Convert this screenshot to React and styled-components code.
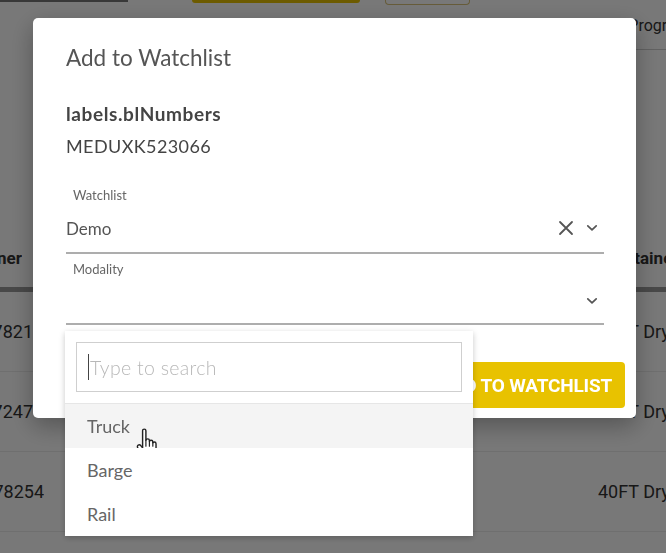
import React from "react";
import styled, { createGlobalStyle } from "styled-components";

const Global = createGlobalStyle`
  html, body { margin: 0; padding: 0; background: #fff; }
  body { font-family: Lato, "Open Sans", sans-serif; overflow: hidden; }
  * { box-sizing: border-box; }
`;

const Page = styled.div`
  width: 666px;
  height: 553px;
  position: relative;
  overflow: hidden;
  background: #fff;
  font-family: Roboto, sans-serif;
  color: #222;
`;

const TopStrip = styled.div`
  display: flex;
  align-items: flex-start;
  height: 6px;
`;

const StripLine = styled.div`
  width: 128px;
  height: 2px;
  background: #777;
`;

const StripButton = styled.div`
  width: ${(p) => p.$w}px;
  height: ${(p) => (p.$outline ? 5 : 3)}px;
  margin-left: ${(p) => p.$ml}px;
  background: ${(p) => (p.$outline ? "transparent" : "#e8c200")};
  border: ${(p) => (p.$outline ? "1px solid #d9c27a" : "none")};
  border-top: none;
  border-radius: 0 0 4px 4px;
`;

const TabsRow = styled.div`
  display: flex;
  gap: 22px;
  padding: 10px 0 0 6px;
  height: 44px;
  border-bottom: 1px solid #cfcfcf;
  margin-left: 540px;
  font-size: 16px;
  color: #333;
  white-space: nowrap;
  overflow: hidden;
`;

const HeadRow = styled.div`
  display: flex;
  justify-content: space-between;
  align-items: center;
  height: 242px;
  padding-top: 178px;
  border-bottom: 5px solid #9a9a9a;
  font-weight: 700;
  font-size: 17px;
  color: #333;
`;

const Row = styled.div`
  display: flex;
  justify-content: space-between;
  align-items: center;
  height: 80px;
  border-bottom: 1px solid #ececec;
  font-size: 18px;
  color: #333;
`;

const LeftCell = styled.div`
  width: ${(p) => p.$w}px;
  display: flex;
  justify-content: flex-end;
  overflow: hidden;
  white-space: nowrap;
  flex-shrink: 0;
`;

const RightCell = styled.div`
  width: ${(p) => p.$w}px;
  white-space: nowrap;
  overflow: hidden;
  flex-shrink: 0;
`;

const Overlay = styled.div`
  position: fixed;
  inset: 0;
  background: rgba(0, 0, 0, 0.53);
`;

const Modal = styled.div`
  position: absolute;
  left: 33px;
  top: 18px;
  width: 603px;
  height: 400px;
  background: #fff;
  border-radius: 5px;
  box-shadow: 0 8px 24px rgba(0, 0, 0, 0.3);
  display: flex;
  flex-direction: column;
  font-family: Lato, sans-serif;
`;

const Body = styled.div`
  padding: 26px 32px 0 33px;
  display: flex;
  flex-direction: column;
`;

const Title = styled.h2`
  margin: 0;
  font-size: 22.5px;
  line-height: 28px;
  font-weight: 400;
  color: #555;
`;

const InfoLabel = styled.div`
  margin-top: 26px;
  font-size: 19px;
  line-height: 32px;
  font-weight: 700;
  letter-spacing: 0.6px;
  color: #444;
`;

const InfoValue = styled.div`
  font-size: 18px;
  line-height: 32px;
  color: #444;
  letter-spacing: 0.4px;
`;

const Field = styled.div`
  position: relative;
  margin-top: ${(p) => p.$mt}px;
  display: flex;
  flex-direction: column;
`;

const FieldLabel = styled.div`
  font-size: 13px;
  line-height: 18px;
  color: #666;
  padding-left: 7px;
`;

const FieldRow = styled.div`
  height: ${(p) => p.$h}px;
  display: flex;
  align-items: center;
  border-bottom: 2px solid #adadad;
  padding-right: 6px;
`;

const FieldValue = styled.div`
  flex: 1;
  font-size: 17px;
  color: #555;
`;

const IconButton = styled.span`
  display: flex;
  align-items: center;
  justify-content: center;
  margin-left: ${(p) => p.$ml || 0}px;
  color: #555;
`;

const Footer = styled.div`
  display: flex;
  justify-content: flex-end;
  padding: 36px 11px 10px;
  margin-top: auto;
`;

const PrimaryButton = styled.button`
  height: 46px;
  padding: 0 13px 0 16px;
  border: none;
  border-radius: 4px;
  background: #e8c200;
  color: #fff;
  font-family: Roboto, sans-serif;
  font-weight: 700;
  font-size: 19px;
  letter-spacing: -0.2px;
  text-transform: uppercase;
`;

const Dropdown = styled.div`
  position: absolute;
  left: -1px;
  top: calc(100% + 6px);
  width: 408px;
  background: #fff;
  box-shadow: 0 2px 6px rgba(0, 0, 0, 0.22);
  z-index: 2;
`;

const SearchWrap = styled.div`
  padding: 11px 11px 11px;
  border-bottom: 1px solid #e6e6e6;
`;

const SearchBox = styled.div`
  height: 50px;
  border: 1px solid #cfcfcf;
  display: flex;
  align-items: center;
  padding-left: 11px;
  font-family: Lato, sans-serif;
  font-size: 19.5px;
  font-weight: 300;
  letter-spacing: 0.3px;
  color: #b8b8b8;
`;

const Caret = styled.span`
  width: 1px;
  height: 26px;
  background: #444;
  margin-right: 1px;
`;

const Option = styled.div`
  position: relative;
  height: 44px;
  display: flex;
  align-items: center;
  padding-left: 22px;
  font-size: 18px;
  color: #666;
  background: ${(p) => (p.$active ? "#f4f4f4" : "#fff")};
`;

const Pointer = styled.svg`
  position: absolute;
  left: 71px;
  top: 24px;
`;

const CloseIcon = () => (
  <svg width="16" height="16" viewBox="0 0 16 16">
    <path d="M2 2 L14 14 M14 2 L2 14" stroke="#555" strokeWidth="1.8" fill="none" strokeLinecap="round" />
  </svg>
);

const Chevron = () => (
  <svg width="12" height="8" viewBox="0 0 12 8">
    <path d="M1.8 1.8 L6 5.8 L10.2 1.8" stroke="#555" strokeWidth="1.7" fill="none" strokeLinecap="round" strokeLinejoin="round" />
  </svg>
);

const HandCursor = () => (
  <Pointer width="22" height="31" viewBox="0 0 20 28">
    <path
      d="M6 2.5c0-1 .7-1.6 1.5-1.6S9 1.5 9 2.5V11c.3-.8 1-1.2 1.7-1.2.9 0 1.5.7 1.5 1.6v.6c.3-.6.9-1 1.6-1 .9 0 1.5.7 1.5 1.6v.8c.3-.5.8-.8 1.4-.8.9 0 1.5.7 1.5 1.6v5.6c0 3.4-2.5 6.6-6 6.6H10c-2.2 0-3.6-1-4.8-2.8L1.6 18c-.6-.9-.4-2 .4-2.5.8-.5 1.7-.3 2.3.4L6 18V2.5z"
      fill="#fff"
      stroke="#222"
      strokeWidth="1.3"
      strokeLinejoin="round"
    />
    <path d="M9 11v5.5M12.2 12v4.5M15.3 13v3.5" stroke="#222" strokeWidth="1.1" strokeLinecap="round" />
  </Pointer>
);

export default function App() {
  return (
    <>
      <Global />
      <Page>
        <TopStrip>
          <StripLine />
          <StripButton $w={168} $ml={64} />
          <StripButton $w={85} $ml={25} $outline />
        </TopStrip>
        <TabsRow>
          <span>Services</span>
          <span>Progress</span>
        </TabsRow>
        <HeadRow>
          <LeftCell $w={22}>Owner</LeftCell>
          <RightCell $w={62}>Container</RightCell>
        </HeadRow>
        <Row>
          <LeftCell $w={33}>MSCU4417821</LeftCell>
          <RightCell $w={68}>40FT Dry Van</RightCell>
        </Row>
        <Row>
          <LeftCell $w={33}>MSCU4417247</LeftCell>
          <RightCell $w={68}>40FT Dry Van</RightCell>
        </Row>
        <Row>
          <LeftCell $w={44}>MSCU8178254</LeftCell>
          <RightCell $w={68}>40FT Dry Van</RightCell>
        </Row>
        <Overlay>
          <Modal>
            <Body>
              <Title>Add to Watchlist</Title>
              <InfoLabel>labels.blNumbers</InfoLabel>
              <InfoValue>MEDUXK523066</InfoValue>
              <Field $mt={24}>
                <FieldLabel>Watchlist</FieldLabel>
                <FieldRow $h={50}>
                  <FieldValue>Demo</FieldValue>
                  <IconButton><CloseIcon /></IconButton>
                  <IconButton $ml={12}><Chevron /></IconButton>
                </FieldRow>
              </Field>
              <Field $mt={6}>
                <FieldLabel>Modality</FieldLabel>
                <FieldRow $h={47}>
                  <FieldValue />
                  <IconButton><Chevron /></IconButton>
                </FieldRow>
                <Dropdown>
                  <SearchWrap>
                    <SearchBox>
                      <Caret />
                      Type to search
                    </SearchBox>
                  </SearchWrap>
                  <Option $active>
                    Truck
                    <HandCursor />
                  </Option>
                  <Option>Barge</Option>
                  <Option>Rail</Option>
                </Dropdown>
              </Field>
            </Body>
            <Footer>
              <PrimaryButton>Add to Watchlist</PrimaryButton>
            </Footer>
          </Modal>
        </Overlay>
      </Page>
    </>
  );
}
